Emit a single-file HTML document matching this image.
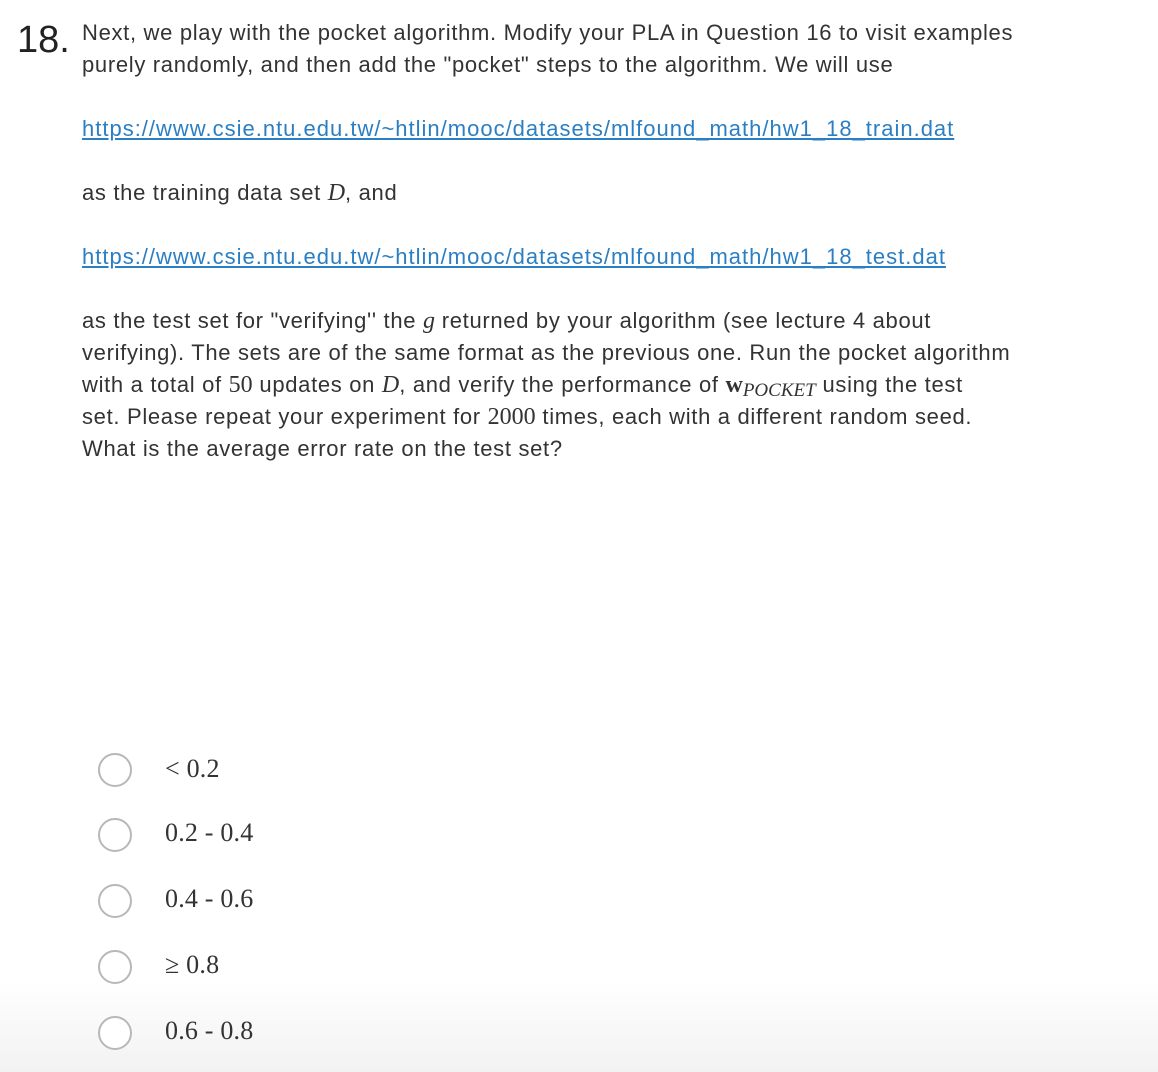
<!DOCTYPE html>
<html><head><meta charset="utf-8"><style>
body{margin:0;width:1158px;height:1072px;background:linear-gradient(to bottom,#fff 0,#fff 980px,#f2f2f2 1072px);font-family:"Liberation Sans",sans-serif;color:#333;position:relative;overflow:hidden}
.num{position:absolute;left:17px;top:18px;font-size:38px;color:#222;line-height:44px}
.l{position:absolute;left:82px;font-size:22px;letter-spacing:0.68px;white-space:nowrap;line-height:32px}
a{color:#2a7fc4;text-decoration:underline;letter-spacing:1.0px}
.m{font-family:"Liberation Serif",serif;font-size:24px;letter-spacing:0}
.mi{font-family:"Liberation Serif",serif;font-style:italic;font-size:24px;letter-spacing:0}
.r{position:absolute;left:98px;width:30px;height:30px;border:2px solid #b8b8b8;border-radius:50%;background:#fff}
.o{position:absolute;left:165px;font-family:"Liberation Serif",serif;font-size:26px;letter-spacing:0.2px;color:#333;line-height:30px}
</style></head><body>
<div class="num">18.</div>
<div class="l" style="top:17px">Next, we play with the pocket algorithm. Modify your PLA in Question 16 to visit examples</div>
<div class="l" style="top:49px">purely randomly, and then add the "pocket" steps to the algorithm. We will use</div>
<div class="l" style="top:113px"><a>https://www.csie.ntu.edu.tw/~htlin/mooc/datasets/mlfound_math/hw1_18_train.dat</a></div>
<div class="l" style="top:177px">as the training data set <span class="mi">D</span>, and</div>
<div class="l" style="top:241px"><a>https://www.csie.ntu.edu.tw/~htlin/mooc/datasets/mlfound_math/hw1_18_test.dat</a></div>
<div class="l" style="top:305px">as the test set for "verifying'' the <span class="mi">g</span> returned by your algorithm (see lecture 4 about</div>
<div class="l" style="top:337px">verifying). The sets are of the same format as the previous one. Run the pocket algorithm</div>
<div class="l" style="top:369px">with a total of <span class="m">50</span> updates on <span class="mi">D</span>, and verify the performance of <b class="m">w</b><span class="mi" style="font-size:19px;position:relative;top:4px">POCKET</span> using the test</div>
<div class="l" style="top:401px">set. Please repeat your experiment for <span class="m">2000</span> times, each with a different random seed.</div>
<div class="l" style="top:433px">What is the average error rate on the test set?</div>
<div class="r" style="top:753px"></div><div class="o" style="top:754px">&lt; 0.2</div>
<div class="r" style="top:818px"></div><div class="o" style="top:818px">0.2 - 0.4</div>
<div class="r" style="top:884px"></div><div class="o" style="top:884px">0.4 - 0.6</div>
<div class="r" style="top:950px"></div><div class="o" style="top:950px">≥ 0.8</div>
<div class="r" style="top:1016px"></div><div class="o" style="top:1016px">0.6 - 0.8</div>
</body></html>
